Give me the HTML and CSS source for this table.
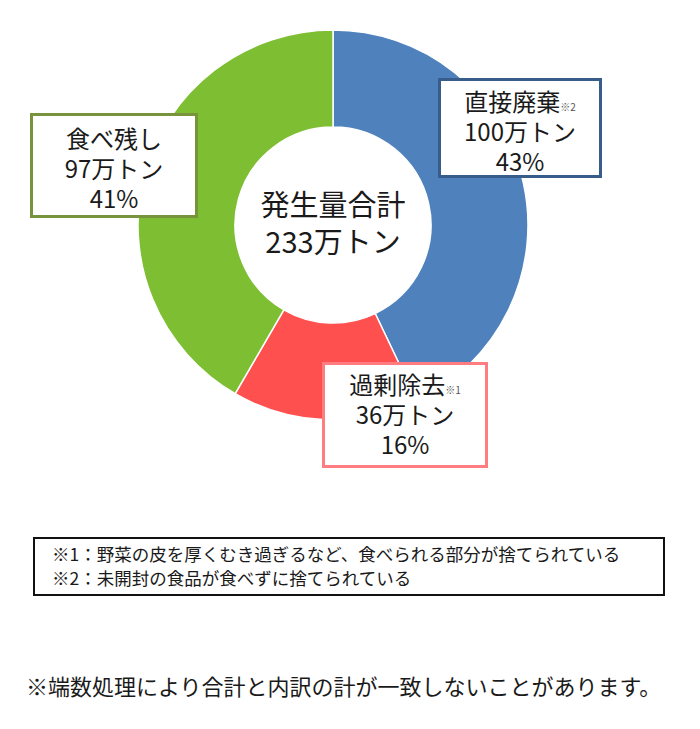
FILE: index.html
```html
<!DOCTYPE html>
<html lang="ja">
<head>
<meta charset="utf-8">
<title>食品ロス発生量</title>
<link rel="stylesheet" href="styles.css">
</head>
<body>
<div class="page">
  <div class="chart">
    <svg class="donut" width="700" height="480" viewBox="0 0 700 480" xmlns="http://www.w3.org/2000/svg">
      <path class="slice blue" d="M333,30 A195,195 0 0 1 416.95,401.0 L375.19,313.45 A98,98 0 0 0 333,127 Z"/>
      <path class="slice red" d="M416.95,401.0 A195,195 0 0 1 235.2,393.7 L283.85,309.79 A98,98 0 0 0 375.19,313.45 Z"/>
      <path class="slice green" d="M235.2,393.7 A195,195 0 0 1 333,30 L333,127 A98,98 0 0 0 283.85,309.79 Z"/>
    </svg>
    <div class="center-text">発生量合計<br>233万トン</div>
    <div class="label label-green">食べ残し<br>97万トン<br>41%</div>
    <div class="label label-blue">直接廃棄<span class="mark">※2</span><br>100万トン<br>43%</div>
    <div class="label label-red">過剰除去<span class="mark">※1</span><br>36万トン<br>16%</div>
  </div>
  <div class="note">
    <p class="note-line">※1：野菜の皮を厚くむき過ぎるなど、食べられる部分が捨てられている</p>
    <p class="note-line">※2：未開封の食品が食べずに捨てられている</p>
  </div>
  <p class="footer">※端数処理により合計と内訳の計が一致しないことがあります。</p>
</div>
</body>
</html>
```
FILE: styles.css
```css
html, body {
  margin: 0;
  padding: 0;
  background: #ffffff;
}
body {
  font-family: "Noto Sans CJK JP", "Noto Sans", sans-serif;
  color: #1a1a1a;
}
.page {
  width: 700px;
  height: 729px;
  overflow: hidden;
}
.chart {
  position: relative;
  width: 700px;
  height: 480px;
}
.donut {
  display: block;
}
.slice {
  stroke: #ffffff;
  stroke-width: 1.5;
  stroke-linejoin: round;
}
.blue { fill: #4f81bd; }
.red { fill: #ff5050; }
.green { fill: #7dbe32; }

.center-text {
  position: absolute;
  left: 183px;
  top: 185px;
  width: 300px;
  text-align: center;
  font-size: 29px;
  line-height: 37px;
}
.label {
  position: absolute;
  box-sizing: border-box;
  background: #ffffff;
  border: 3px solid;
  text-align: center;
  font-size: 24px;
  line-height: 30px;
}
.label-green {
  left: 30px;
  top: 113px;
  width: 168px;
  height: 105px;
  padding-top: 7px;
  border-color: #77933c;
}
.label-blue {
  left: 438px;
  top: 78px;
  width: 164px;
  height: 100px;
  padding-top: 5px;
  border-color: #385d8a;
}
.label-red {
  left: 322px;
  top: 362px;
  width: 166px;
  height: 106px;
  padding-top: 4px;
  border-color: #ff7c80;
}
.mark {
  font-size: 10px;
  line-height: 0;
  color: #555555;
}
.note {
  box-sizing: border-box;
  margin: 57px 0 0 33px;
  width: 632px;
  height: 59px;
  border: 2px solid #111111;
  padding: 3px 0 0 17px;
}
.note-line {
  margin: 0;
  font-size: 17.5px;
  line-height: 24px;
  white-space: nowrap;
}
.footer {
  margin: 74px 0 0 26px;
  font-size: 22px;
  line-height: 30px;
  white-space: nowrap;
}
```
